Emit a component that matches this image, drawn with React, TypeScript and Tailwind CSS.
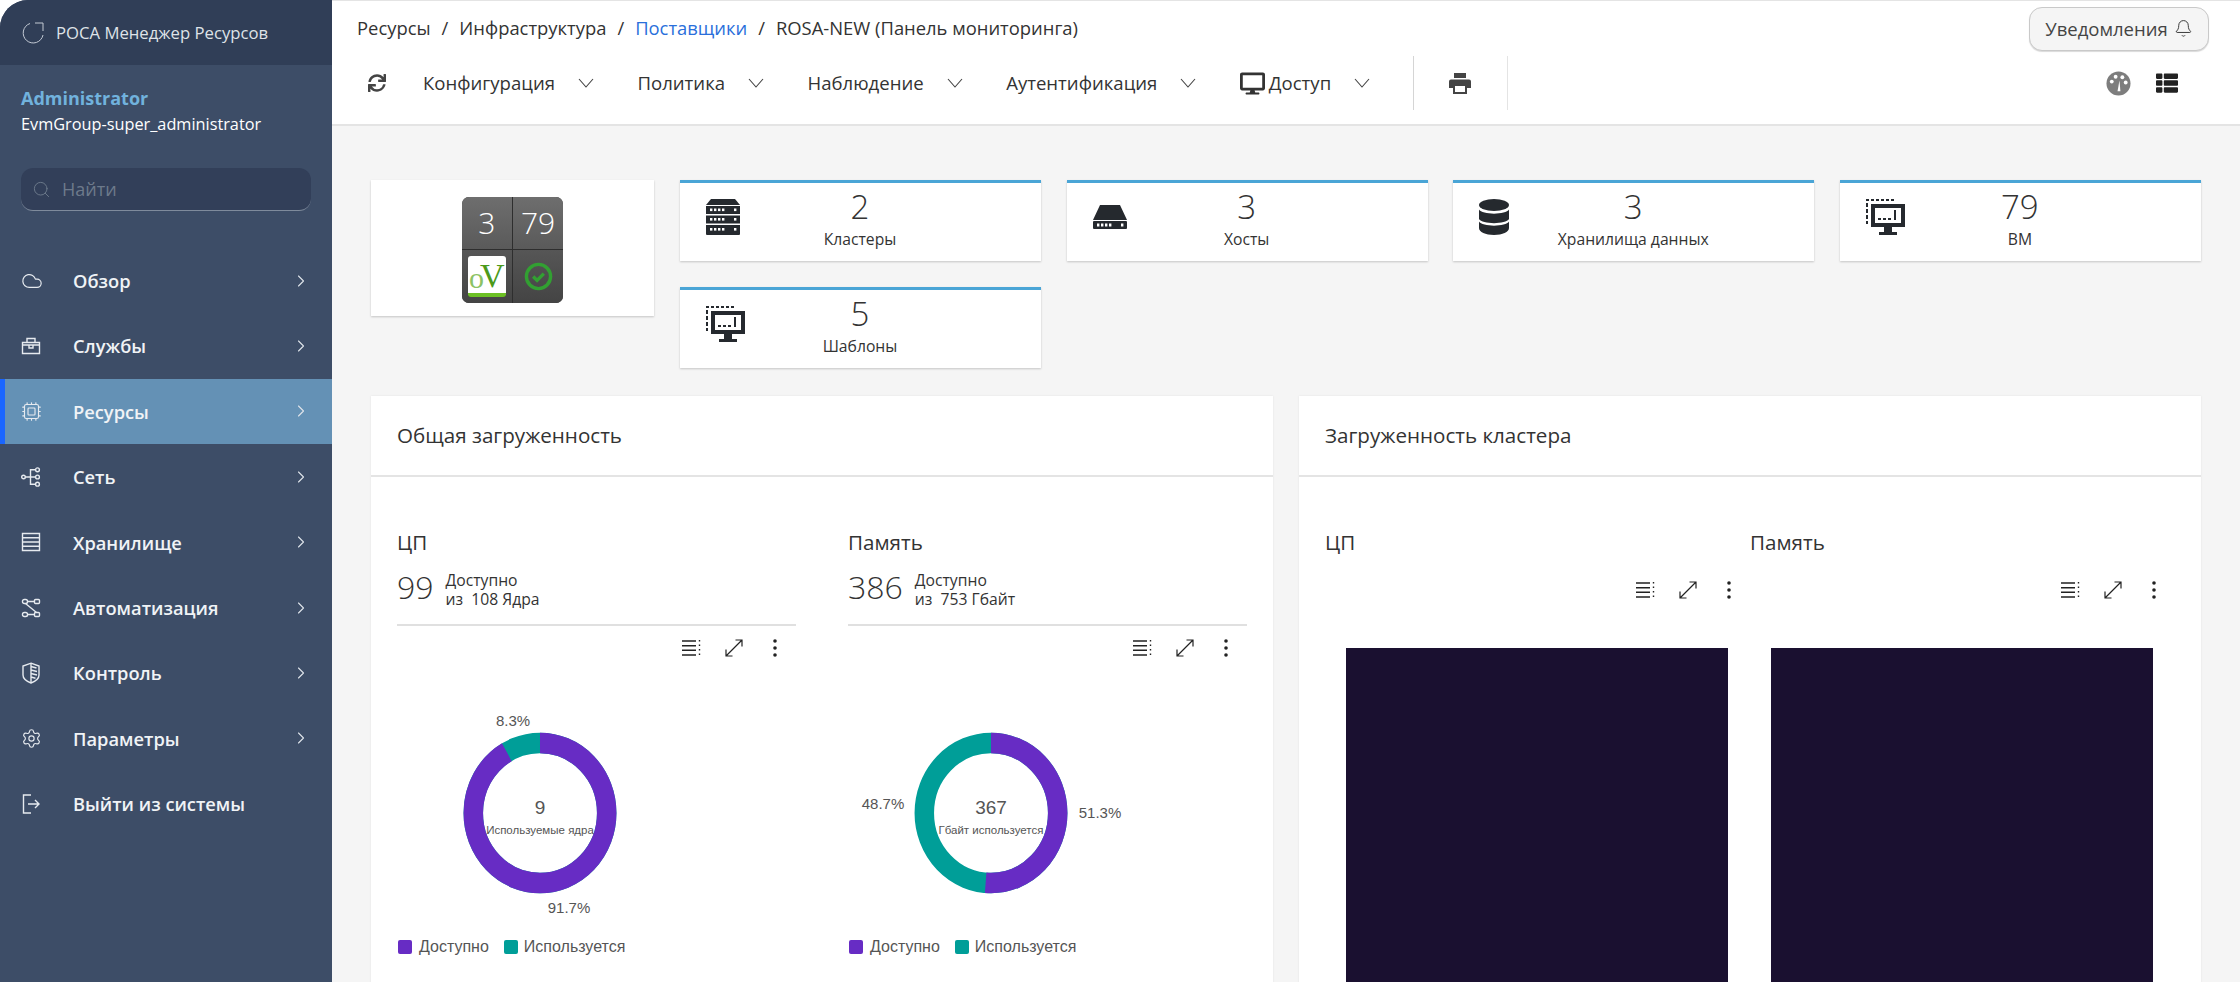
import { ChevronRight, Cloud, Cpu, Search, Settings, Bell } from "lucide-react";
import { FaDesktop, FaSync, FaThList } from "react-icons/fa";

const sw = { fill: "none", stroke: "currentColor", strokeWidth: 1.4 } as const;

function ToolboxIcon() {
  return (
    <svg viewBox="0 0 20 20" className="h-[20px] w-[20px]" {...sw}>
      <path d="M1.5 9h17v8.5h-17zM1.5 9V6.5h17V9M6 6.5V2.5h8v4M8 9v3h4V9" />
    </svg>
  );
}
function NetworkIcon() {
  return (
    <svg viewBox="0 0 20 20" className="h-[20px] w-[20px]" {...sw}>
      <circle cx="2.5" cy="10" r="1.8" />
      <circle cx="16.5" cy="2.8" r="1.9" />
      <circle cx="16.5" cy="10" r="1.9" />
      <circle cx="16.5" cy="17.2" r="1.9" />
      <path d="M4.3 10h10.3M9.5 10V2.8h5.1M9.5 10v7.2h5.1" />
    </svg>
  );
}
function StorageIcon() {
  return (
    <svg viewBox="0 0 20 20" className="h-[20px] w-[20px]" {...sw}>
      <path d="M1.5 1.5h17v17h-17zM1.5 5.7h17M1.5 10h17M1.5 14.2h17" />
    </svg>
  );
}
function FlowIcon() {
  return (
    <svg viewBox="0 0 20 20" className="h-[20px] w-[20px]" {...sw}>
      <rect x="1.5" y="1.5" width="5" height="4" rx="1.8" />
      <rect x="13.5" y="1.5" width="5" height="4" rx="1" />
      <rect x="1.5" y="14.5" width="5" height="4" rx="1.8" />
      <rect x="13.5" y="14.5" width="5" height="4" rx="1" />
      <path d="M6.5 3.5h7M6.5 16.5h7M4.5 5.5 15.5 14.5" />
    </svg>
  );
}
function ShieldIcon() {
  return (
    <svg viewBox="0 0 20 22" className="h-[22px] w-[20px]" {...sw}>
      <path d="M10 1.2 18 4v9c0 4-4 6.500-8 8-4-1.500-8-4-8-8V4z" />
      <path d="M10 4.500 15.500 6M10 8l6 1.500M10 11.500l6 1.500M10 15l4.500 1.200M10 1.200V21" />
    </svg>
  );
}
function LogoutIcon() {
  return (
    <svg viewBox="0 0 20 20" className="h-[20px] w-[20px]" {...sw}>
      <path d="M10 1H2.500v18H10M7 10h11M14 6l4 4-4 4" />
    </svg>
  );
}

const navItems = [
  { label: "Обзор", icon: <Cloud size={22} strokeWidth={1.3} /> },
  { label: "Службы", icon: <ToolboxIcon /> },
  { label: "Ресурсы", icon: <Cpu size={21} strokeWidth={1.3} />, active: true },
  { label: "Сеть", icon: <NetworkIcon /> },
  { label: "Хранилище", icon: <StorageIcon /> },
  { label: "Автоматизация", icon: <FlowIcon /> },
  { label: "Контроль", icon: <ShieldIcon /> },
  { label: "Параметры", icon: <Settings size={21} strokeWidth={1.3} /> },
  { label: "Выйти из системы", icon: <LogoutIcon />, noArrow: true },
];

function Sidebar() {
  return (
    <aside className="flex w-[332px] shrink-0 flex-col overflow-hidden rounded-tl-[28px] bg-[#3d4d67] text-white">
      <div className="flex h-[65px] items-center gap-[11px] bg-[#303e57] pl-[21px] text-[16.700px] text-[#dfe3e8]">
        <svg viewBox="0 0 24 24" className="h-[24px] w-[24px] text-[#c3cad4]" fill="none" stroke="currentColor" strokeWidth="1">
          <path d="M14 2h8v8M22 14a10 10 0 1 1-13-11.500" />
        </svg>
        <span>РОСА Менеджер Ресурсов</span>
      </div>

      <div className="pl-[21px] pt-[21px]">
        <div className="text-[18px] font-bold leading-[24px] text-[#71b2dd]">Administrator</div>
        <div className="mt-[2px] text-[16.300px] leading-[24px] text-white">EvmGroup-super_administrator</div>
      </div>

      <div className="ml-[21px] mt-[32px] flex h-[43px] w-[290px] items-center gap-[11px] rounded-[12px] border-b border-[#7f8b9c] bg-[#323f59] pl-[11px] text-[18px] text-[#6d7a8b]">
        <Search size={19} strokeWidth={1.2} />
        <span>Найти</span>
      </div>

      <nav className="mt-[37px] flex flex-col">
        {navItems.map((item) => (
          <div
            key={item.label}
            className={
              item.active
                ? "flex h-[65.400px] items-center border-l-[5px] border-[#1a66ff] bg-[#6491b5] pl-[16px] pr-[21px]"
                : "flex h-[65.400px] items-center pl-[21px] pr-[21px]"
            }
          >
            <div className="flex w-[52px] items-center text-[#e6eaef]">{item.icon}</div>
            <span className="flex-1 text-[18.300px] font-semibold text-[#f0f3f6]">{item.label}</span>
            {!item.noArrow && <ChevronRight size={20} strokeWidth={1.3} className="text-[#dfe4ea]" />}
          </div>
        ))}
      </nav>
    </aside>
  );
}

function DashboardIcon() {
  return (
    <svg viewBox="0 0 26 26" className="h-[25px] w-[25px]">
      <circle cx="13" cy="13" r="12.500" fill="#7d7d7d" />
      <circle cx="6" cy="11" r="2" fill="#fff" />
      <circle cx="10" cy="6" r="2" fill="#fff" />
      <circle cx="17" cy="6.500" r="2" fill="#fff" />
      <circle cx="20.500" cy="12" r="2" fill="#fff" />
      <path d="M12 21 14 10l1 11z" fill="#fff" />
    </svg>
  );
}

function PrinterIcon() {
  return (
    <svg viewBox="0 0 22 21" className="ml-[35px] h-[21px] w-[22px]" fill="#444">
      <path d="M5 0h12v5H5z" />
      <path fillRule="evenodd" d="M2 6.500h18a2 2 0 0 1 2 2V15h-4v6H4v-6H0V8.500a2 2 0 0 1 2-2zM6 13v6h10v-6z" />
    </svg>
  );
}

function MenuItem({ label, icon }: { label: string; icon?: React.ReactNode }) {
  return (
    <div className="flex items-center">
      {icon}
      <span className="text-[18.570px] text-[#333]">{label}</span>
      <svg viewBox="0 0 16 10" className="ml-[23px] h-[10px] w-[16px] text-[#444]" fill="none" stroke="currentColor" strokeWidth="1.100">
        <path d="M1 1l7 8 7-8" />
      </svg>
    </div>
  );
}

function TopBar() {
  return (
    <header className="h-[126px] shrink-0 border-b-2 border-t border-[#e4e4e4] bg-white">
      <div className="flex h-[55px] items-center justify-between pl-[25px] pr-[31px]">
        <div className="-mt-[2px] flex items-center gap-[11px] text-[18.400px] text-[#333]">
          <span>Ресурсы</span>
          <span>/</span>
          <span>Инфраструктура</span>
          <span>/</span>
          <span className="text-[#2a6fdb]">Поставщики</span>
          <span>/</span>
          <span>ROSA-NEW (Панель мониторинга)</span>
        </div>
        <div className="flex h-[44px] w-[180px] items-center justify-center gap-[6px] rounded-[13px] border border-[#c9c9c9] bg-[#f5f5f5] text-[18.500px] text-[#444] shadow-[0_1px_1px_rgba(0,0,0,0.15)]">
          <span>Уведомления</span>
          <Bell size={19} strokeWidth={1.200} className="text-[#333]" />
        </div>
      </div>
      <div className="flex h-[54px] items-center pl-[36px] pr-[62px]">
        <FaSync className="h-[18px] w-[18px] text-[#444]" />
        <div className="ml-[37px] flex items-center gap-[43.500px]">
          <MenuItem label="Конфигурация" />
          <MenuItem label="Политика" />
          <MenuItem label="Наблюдение" />
          <MenuItem label="Аутентификация" />
          <MenuItem label="Доступ" icon={<FaDesktop className="mr-[4px] h-[25px] w-[25px] text-[#333]" />} />
        </div>
        <div className="ml-[43px] h-[54px] border-l border-[#d5d5d5]" />
        <PrinterIcon />
        <div className="ml-[36px] h-[54px] border-l border-[#e4e4e4]" />
        <div className="ml-auto flex items-center gap-[25px]">
          <DashboardIcon />
          <FaThList className="h-[22px] w-[22px] text-[#222]" />
        </div>
      </div>
    </header>
  );
}

function ClusterIcon() {
  return (
    <svg viewBox="0 0 34 36" className="h-[36px] w-[34px]" fill="#25292e">
      <path d="M5 0h24l5 6H0z" />
      <path fillRule="evenodd" d="M0 7h34v8H0zM0 16.500h34v8H0zM0 26h34v9a1 1 0 0 1-1 1H1a1 1 0 0 1-1-1z" />
      <g fill="#fff">
        <rect x="4" y="9.500" width="2.400" height="2.600" /><rect x="8" y="9.500" width="2.400" height="2.600" /><rect x="12" y="9.500" width="2.400" height="2.600" /><rect x="16" y="9.500" width="2.400" height="2.600" /><rect x="28" y="9.500" width="2.400" height="2.600" />
        <rect x="4" y="19" width="2.400" height="2.600" /><rect x="8" y="19" width="2.400" height="2.600" /><rect x="12" y="19" width="2.400" height="2.600" /><rect x="16" y="19" width="2.400" height="2.600" /><rect x="28" y="19" width="2.400" height="2.600" />
        <rect x="4" y="29" width="2.400" height="2.600" /><rect x="8" y="29" width="2.400" height="2.600" /><rect x="12" y="29" width="2.400" height="2.600" /><rect x="16" y="29" width="2.400" height="2.600" /><rect x="28" y="29" width="2.400" height="2.600" />
      </g>
    </svg>
  );
}
function HostIcon() {
  return (
    <svg viewBox="0 0 34 24" className="h-[24px] w-[34px]" fill="#25292e">
      <path d="M7 0h20l7 15H0z" />
      <rect y="16" width="34" height="8" rx="1" />
      <g fill="#fff">
        <rect x="4" y="18.500" width="2.400" height="3" /><rect x="8" y="18.500" width="2.400" height="3" /><rect x="12" y="18.500" width="2.400" height="3" /><rect x="16" y="18.500" width="2.400" height="3" /><rect x="28" y="18.500" width="2.400" height="3" />
      </g>
    </svg>
  );
}
function DatabaseIcon() {
  return (
    <svg viewBox="0 0 30 36" className="h-[36px] w-[30px]" fill="#25292e">
      <ellipse cx="15" cy="6" rx="15" ry="6" />
      <path d="M0 10.500C3 16 27 16 30 10.500V20c-3 5.500-27 5.500-30 0zM0 22.500C3 28 27 28 30 22.500V29c0 4-6.500 7-15 7S0 33 0 29z" />
    </svg>
  );
}
function VmIcon() {
  return (
    <svg viewBox="0 0 39 36" className="h-[36px] w-[39px]" fill="#25292e">
      <path d="M0 0h3v2H0zM5 0h3v2H5zM10 0h3v2h-3zM15 0h3v2h-3zM20 0h3v2h-3zM25 0h3v2h-3zM0 4h2v4H0zM0 10h2v4H0zM0 16h2v4H0zM0 22h2v3H0z" />
      <path fillRule="evenodd" d="M5 5h34v23H26v5h5v3H13v-3h5v-5H5zM9 9v15h26V9z" />
      <path d="M12 19h3v2h-3zM17 19h3v2h-3zM22 19h3v2h-3zM28 11h2v10h-2z" />
    </svg>
  );
}

const stats = [
  { value: "2", label: "Кластеры", icon: <ClusterIcon /> },
  { value: "3", label: "Хосты", icon: <HostIcon /> },
  { value: "3", label: "Хранилища данных", icon: <DatabaseIcon /> },
  { value: "79", label: "ВМ", icon: <VmIcon /> },
  { value: "5", label: "Шаблоны", icon: <VmIcon /> },
];

function StatCard({ value, label, icon }: { value: string; label: string; icon: React.ReactNode }) {
  return (
    <div className="relative flex h-[81px] border-t-[3px] border-[#4aa5d6] bg-white shadow-[0_1px_2px_rgba(0,0,0,0.2)]">
      <div className="flex w-[100px] items-center pb-[10px] pl-[26px]">{icon}</div>
      <div className="flex w-[160px] flex-col items-center pt-[5px]">
        <span className="text-[33px] font-light leading-[38px] text-[#333]">{value}</span>
        <span className="mt-[3px] text-[15.700px] leading-[20px] text-[#333]">{label}</span>
      </div>
    </div>
  );
}

function LogoCard() {
  return (
    <div className="flex h-[136px] w-[283px] shrink-0 items-center justify-center bg-white pt-[3px] shadow-[0_1px_2px_rgba(0,0,0,0.2)]">
      <div className="grid h-[106px] w-[101px] grid-cols-2 grid-rows-2 gap-[1.500px] overflow-hidden rounded-[7px] bg-[#2e2e2e]">
        <div className="flex items-center justify-center bg-gradient-to-b from-[#6e6e6e] to-[#5a5a5a] text-[30px] font-light text-white">3</div>
        <div className="flex items-center justify-center bg-gradient-to-b from-[#6e6e6e] to-[#5a5a5a] text-[30px] font-light text-white">79</div>
        <div className="flex items-center justify-center bg-gradient-to-b from-[#565656] to-[#444]">
          <div className="flex h-[41px] w-[38px] items-end justify-center rounded-[3px] border-b-[4px] border-[#6cc024] bg-white font-['Liberation_Serif',serif] leading-none">
            <span className="text-[30px] text-[#8cc264]">o</span>
            <span className="-ml-[4px] text-[34px] text-[#4c9a1a]">V</span>
          </div>
        </div>
        <div className="flex items-center justify-center bg-gradient-to-b from-[#565656] to-[#444]">
          <svg viewBox="0 0 30 30" className="h-[29px] w-[29px]" fill="none" stroke="#32a032">
            <circle cx="15" cy="15" r="12.500" strokeWidth="3.500" />
            <path d="m9.500 15 4 4 7-7" strokeWidth="3.500" />
          </svg>
        </div>
      </div>
    </div>
  );
}

function ChartTools() {
  return (
    <div className="flex items-center justify-end text-[#222]">
      <svg viewBox="0 0 20 18" className="h-[18px] w-[20px]" fill="none" stroke="currentColor" strokeWidth="1.400">
        <path d="M0 2h14M0 6.700h14M0 11.300h14M0 16h14" />
        <path d="M17.500 1v16" strokeDasharray="1.600 2.900" />
      </svg>
      <svg viewBox="0 0 18 18" className="ml-[23px] h-[18px] w-[18px]" fill="none" stroke="currentColor" strokeWidth="1.200">
        <path d="M1 17 17 1M10.500 1H17v6.500M1 10.500V17h6.500" />
      </svg>
      <svg viewBox="0 0 4 18" className="ml-[30px] h-[18px] w-[4px]" fill="currentColor">
        <circle cx="2" cy="2" r="1.800" />
        <circle cx="2" cy="9" r="1.800" />
        <circle cx="2" cy="16" r="1.800" />
      </svg>
    </div>
  );
}

type Label = { text: string; x: number; y: number };

function Donut({ used, value, caption, labels }: { used: number; value: string; caption: string; labels: Label[] }) {
  const purple = 100 - used;
  return (
    <svg viewBox="0 0 399 250" className="mt-[23px] h-[250px] w-[399px] font-['Liberation_Sans',sans-serif]">
      {/* the ring is a little taller than wide in the picture */}
      <g transform="translate(143 133) scale(1 1.050)">
        <circle r="66.700" fill="none" stroke="#009e98" strokeWidth="19.500" />
        <circle
          r="66.700"
          fill="none"
          stroke="#672cc4"
          strokeWidth="19.500"
          pathLength={100}
          strokeDasharray={`${purple} ${used}`}
          transform="rotate(-90)"
        />
      </g>
      <text x="143" y="134" textAnchor="middle" fontSize="19" fill="#555">{value}</text>
      <text x="143" y="154" textAnchor="middle" fontSize="11.500" fill="#555">{caption}</text>
      {labels.map((l) => (
        <text key={l.text} x={l.x} y={l.y} textAnchor="middle" fontSize="15" fill="#555">{l.text}</text>
      ))}
    </svg>
  );
}

function Legend() {
  return (
    <div className="mt-[5px] flex items-center font-['Liberation_Sans',sans-serif] text-[16px] text-[#555]">
      <span className="ml-[1px] h-[14px] w-[14px] rounded-[2px] bg-[#672cc4]" />
      <span className="ml-[7px]">Доступно</span>
      <span className="ml-[15px] h-[14px] w-[14px] rounded-[2px] bg-[#009e98]" />
      <span className="ml-[6px]">Используется</span>
    </div>
  );
}

function UsageColumn({ title, free, total, used, value, caption, labels }: {
  title: string;
  free: string;
  total: string;
  used: number;
  value: string;
  caption: string;
  labels: Label[];
}) {
  return (
    <div className="w-[399px]">
      <div className="text-[20.600px] leading-[28px] text-[#333]">{title}</div>
      <div className="mt-[14px] flex h-[40px] items-center gap-[12px]">
        <span className="pb-[7px] text-[32px] font-light text-[#333]">{free}</span>
        <div className="text-[15.700px] leading-[19px] text-[#333]">
          <div>Доступно</div>
          <div className="whitespace-pre">из  {total}</div>
        </div>
      </div>
      <div className="mt-[14px] border-t-2 border-[#e0e0e0] pr-[19px] pt-[13px]">
        <ChartTools />
      </div>
      <Donut used={used} value={value} caption={caption} labels={labels} />
      <Legend />
    </div>
  );
}

function ClusterColumn({ title }: { title: string }) {
  return (
    <div className="w-[425px]">
      <div className="text-[20.600px] leading-[28px] text-[#333]">{title}</div>
      <div className="mt-[25px] w-[406px]">
        <ChartTools />
      </div>
      <div className="ml-[21px] mt-[49px] h-[400px] w-[382px] bg-[#1a1030]" />
    </div>
  );
}

function Panel({ title, children }: { title: string; children: React.ReactNode }) {
  return (
    <section className="h-[700px] bg-white shadow-[0_0_2px_rgba(0,0,0,0.08)]">
      <div className="flex h-[81px] items-center border-b-2 border-[#e4e4e4] pl-[26px] text-[20.600px] text-[#333]">{title}</div>
      <div className="flex pl-[26px] pt-[51px]">{children}</div>
    </section>
  );
}

export default function App() {
  return (
    <div className="flex h-[982px] w-[2240px] overflow-hidden bg-white font-['Open_Sans',sans-serif]">
      <Sidebar />
      <main className="flex min-w-0 flex-1 flex-col overflow-hidden">
        <TopBar />
        <div className="flex-1 overflow-hidden bg-[#f5f5f5] pl-[39px] pr-[39px] pt-[54px]">
          <div className="flex gap-[26px]">
            <LogoCard />
            <div className="grid flex-1 grid-cols-4 gap-x-[25.500px] gap-y-[26px]">
              {stats.map((s) => (
                <StatCard key={s.label} {...s} />
              ))}
            </div>
          </div>
          <div className="mt-[28px] grid grid-cols-2 gap-[26px]">
            <Panel title="Общая загруженность">
              <UsageColumn
                title="ЦП"
                free="99"
                total="108 Ядра"
                used={8.3}
                value="9"
                caption="Используемые ядра"
                labels={[
                  { text: "8.3%", x: 116, y: 46 },
                  { text: "91.7%", x: 172, y: 233 },
                ]}
              />
              <div className="ml-[52px]">
                <UsageColumn
                  title="Память"
                  free="386"
                  total="753 Гбайт"
                  used={48.7}
                  value="367"
                  caption="Гбайт используется"
                  labels={[
                    { text: "48.7%", x: 35, y: 129 },
                    { text: "51.3%", x: 252, y: 138 },
                  ]}
                />
              </div>
            </Panel>
            <Panel title="Загруженность кластера">
              <ClusterColumn title="ЦП" />
              <ClusterColumn title="Память" />
            </Panel>
          </div>
        </div>
      </main>
    </div>
  );
}
